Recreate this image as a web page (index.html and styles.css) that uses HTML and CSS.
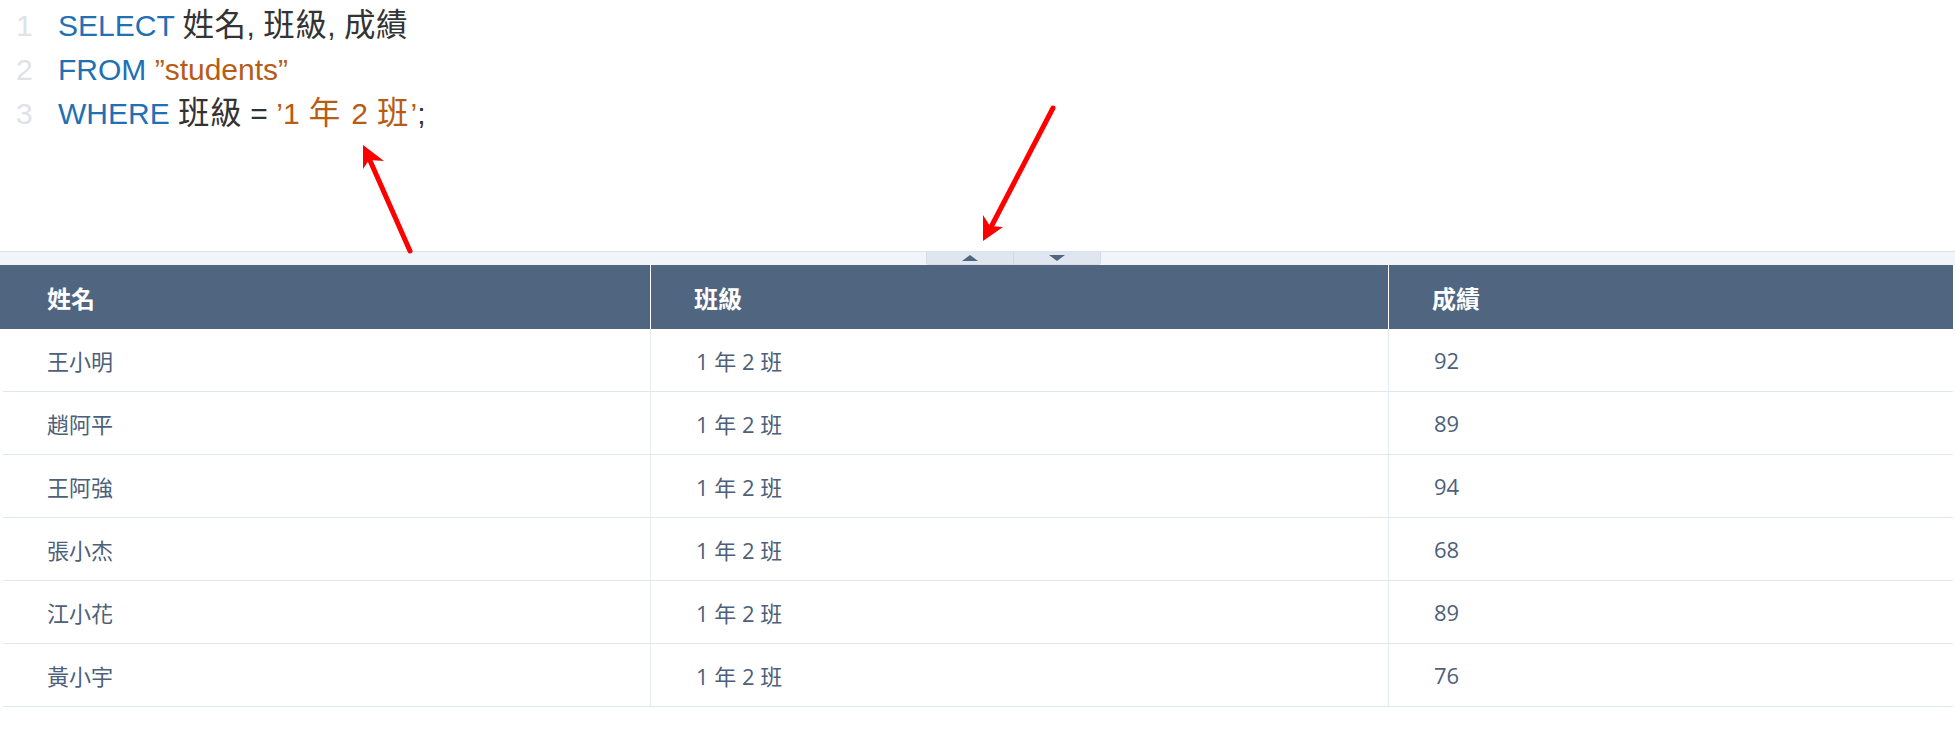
FILE: index.html
```html
<!DOCTYPE html>
<html lang="zh-Hant">
<head>
<meta charset="utf-8">
<title>SQL</title>
<link rel="stylesheet" href="styles.css">
</head>
<body>
<div class="page">
  <div class="editor">
    <div class="line"><span class="ln">1</span><span class="code"><span class="kw">SELECT</span> <span class="zh">姓名</span>, <span class="zh">班級</span>, <span class="zh">成績</span></span></div>
    <div class="line"><span class="ln">2</span><span class="code"><span class="kw">FROM</span> <span class="str">”students”</span></span></div>
    <div class="line"><span class="ln">3</span><span class="code"><span class="kw">WHERE</span> <span class="zh">班級</span> = <span class="str">’1<span class="zh"> 年 </span>2<span class="zh"> 班</span>’</span>;</span></div>
  </div>
  <div class="splitter">
    <div class="btns">
      <div class="btn"><span class="tri up"></span></div>
      <div class="btn"><span class="tri down"></span></div>
    </div>
  </div>
  <div class="table">
    <div class="thead">
      <div class="th">姓名</div>
      <div class="th sep">班級</div>
      <div class="th sep">成績</div>
    </div>
    <div class="row"><div class="td">王小明</div><div class="td sep">1 年 2 班</div><div class="td sep">92</div></div>
    <div class="row"><div class="td">趙阿平</div><div class="td sep">1 年 2 班</div><div class="td sep">89</div></div>
    <div class="row"><div class="td">王阿強</div><div class="td sep">1 年 2 班</div><div class="td sep">94</div></div>
    <div class="row"><div class="td">張小杰</div><div class="td sep">1 年 2 班</div><div class="td sep">68</div></div>
    <div class="row"><div class="td">江小花</div><div class="td sep">1 年 2 班</div><div class="td sep">89</div></div>
    <div class="row"><div class="td">黃小宇</div><div class="td sep">1 年 2 班</div><div class="td sep">76</div></div>
  </div>
  <svg class="arrows" width="1955" height="755" viewBox="0 0 1955 755">
    <line x1="410" y1="251" x2="368" y2="156" stroke="#ff0000" stroke-width="5" stroke-linecap="round"/>
    <polygon points="363,145 363,169 369,160 384,161" fill="#ff0000"/>
    <line x1="1053" y1="108" x2="990" y2="229" stroke="#ff0000" stroke-width="5" stroke-linecap="round"/>
    <polygon points="983,241 983,215 990,226 1003,227" fill="#ff0000"/>
  </svg>
</div>
</body>
</html>
```
FILE: styles.css
```css
html, body {
  margin: 0;
  padding: 0;
  background: #ffffff;
}
.page {
  position: relative;
  width: 1955px;
  height: 755px;
  overflow: hidden;
}
.editor {
  height: 247px;
  padding-top: 4px;
  font-family: "Liberation Sans", "Noto Sans CJK TC", sans-serif;
  font-size: 30px;
  line-height: 44px;
  color: #333333;
}
.line {
  display: flex;
  align-items: baseline;
  height: 44px;
  white-space: pre;
}
.ln {
  width: 42px;
  padding-left: 16px;
  color: #dfe2e7;
}
.zh {
  font-family: "Noto Sans CJK TC", sans-serif;
  font-size: 31.5px;
  line-height: 1;
  letter-spacing: 0.5px;
}
.str .zh {
  letter-spacing: 2px;
}
.kw { color: #2170b4; }
.str { color: #b75c15; }
.splitter {
  height: 13px;
  border-top: 1px solid #dbe3ec;
  background: #f1f5fa;
  display: flex;
}
.btns {
  margin-left: 926px;
  display: flex;
  height: 13px;
}
.btn {
  width: 86px;
  height: 12px;
  background: #dfe6ef;
  border: 1px solid #d3dce7;
  border-top: none;
  display: flex;
  align-items: center;
  justify-content: center;
}
.btn:first-child {
  border-radius: 0 0 0 3px;
  border-right: 1px solid #cfd8e3;
}
.btn:last-child {
  border-left: none;
  border-radius: 0 0 3px 0;
}
.tri {
  width: 0;
  height: 0;
  border-left: 8px solid transparent;
  border-right: 8px solid transparent;
}
.tri.up { border-bottom: 6px solid #506680; }
.tri.down { border-top: 6px solid #506680; }
.table {
  width: 1953px;
  font-family: "Open Sans", "Noto Sans CJK TC", sans-serif;
}
.thead {
  display: grid;
  grid-template-columns: 650px 738px 1fr;
  height: 64px;
  background: #506680;
  color: #ffffff;
  font-weight: 700;
  font-size: 24px;
}
.th {
  display: flex;
  align-items: center;
  padding-left: 47px;
}
.th.sep {
  border-left: 1px solid #ffffff;
  padding-left: 43px;
}
.row {
  display: grid;
  grid-template-columns: 647px 738px 1fr;
  margin-left: 3px;
  height: 62px;
  border-bottom: 1px solid #e1e7ef;
  color: #4d5f7a;
  font-size: 22px;
}
.td {
  display: flex;
  align-items: center;
  padding-left: 44px;
}
.td.sep {
  border-left: 1px solid #e6ebf2;
  padding-left: 45px;
}
.arrows {
  position: absolute;
  left: 0;
  top: 0;
  pointer-events: none;
}
```
